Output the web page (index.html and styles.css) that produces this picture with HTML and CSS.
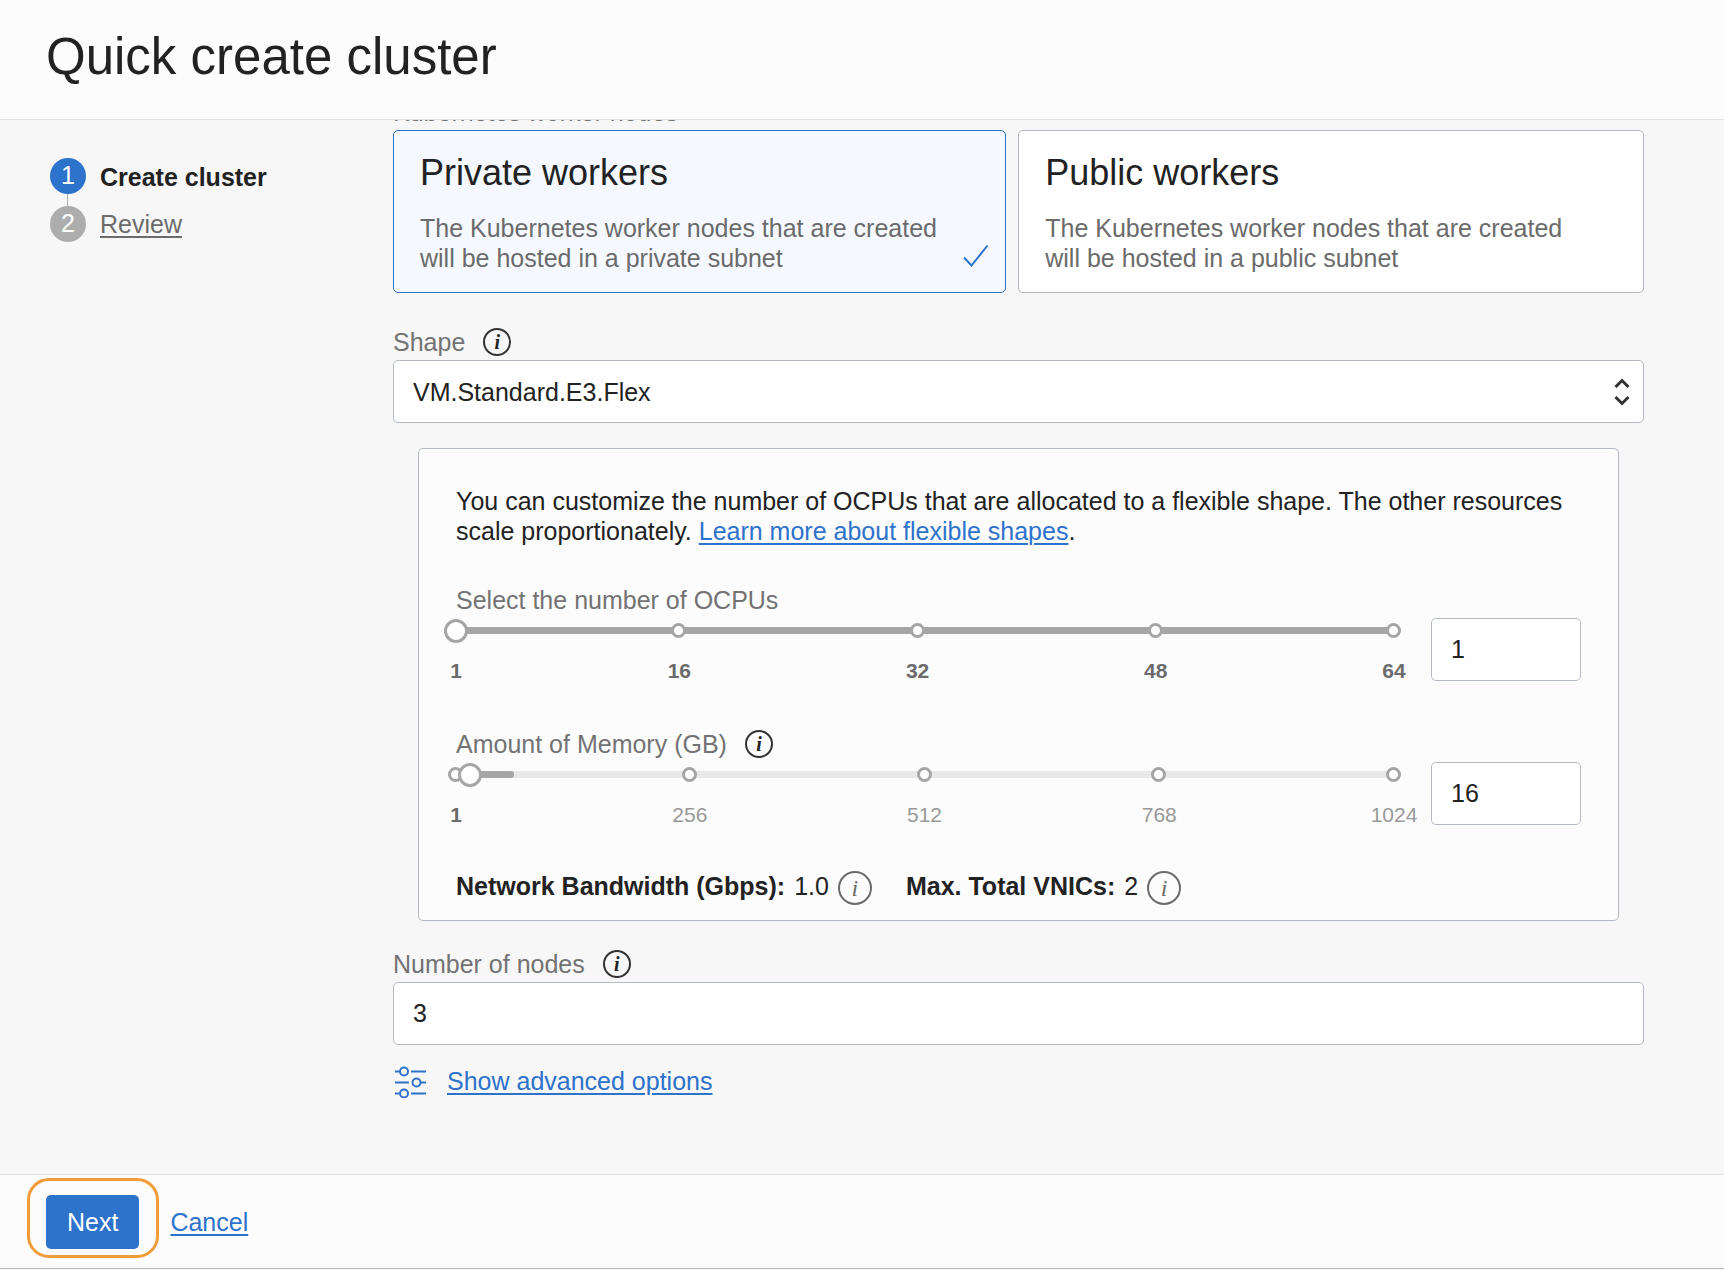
FILE: index.html
```
<!DOCTYPE html>
<html lang="en">
<head>
<meta charset="utf-8">
<meta name="viewport" content="width=device-width, initial-scale=1">
<title>Quick create cluster</title>
<link rel="stylesheet" href="styles.css">
</head>
<body>
<header class="page-header">
  <h1 class="page-title">Quick create cluster</h1>
</header>

<div class="page-body">
  <nav aria-label="Steps">
    <ol class="steps">
      <li class="step step-current"><span class="step-number">1</span><span class="step-name">Create cluster</span></li>
      <li class="step"><span class="step-number">2</span><a class="step-link" href="#review">Review</a></li>
    </ol>
  </nav>

  <main class="form">
    <div class="group-label" id="workers-label">Kubernetes worker nodes</div>
    <div class="cards" role="radiogroup" aria-labelledby="workers-label">
      <label class="card">
        <input class="card-radio" type="radio" name="workers" checked>
        <span class="card-title">Private workers</span>
        <span class="card-text">The Kubernetes worker nodes that are created will be hosted in a private subnet</span>
        <svg class="card-check" viewBox="0 0 26 24" aria-hidden="true"><path d="M1 13.500L8.500 21.500L24.500 1.500" fill="none" stroke="currentColor" stroke-width="2"/></svg>
      </label>
      <label class="card">
        <input class="card-radio" type="radio" name="workers">
        <span class="card-title">Public workers</span>
        <span class="card-text">The Kubernetes worker nodes that are created will be hosted in a public subnet</span>
      </label>
    </div>

    <div class="field shape-field">
      <div class="field-head"><label for="shape">Shape</label><button class="info" type="button" aria-label="About shape">i</button></div>
      <div class="select-box">
        <select class="control" id="shape"><option>VM.Standard.E3.Flex</option></select>
        <svg class="select-arrows" viewBox="0 0 16 28" aria-hidden="true"><path d="M1.500 9L8 2.500L14.500 9M1.500 19L8 25.500L14.500 19" fill="none" stroke="currentColor" stroke-width="3"/></svg>
      </div>
    </div>

    <section class="panel">
      <p class="panel-text">You can customize the number of OCPUs that are allocated to a flexible shape. The other resources scale proportionately. <a href="#flexible">Learn more about flexible shapes</a>.</p>

      <div class="field">
        <div class="field-head"><label for="ocpus">Select the number of OCPUs</label></div>
        <div class="slider-row">
          <div class="slider">
            <div class="track"><div class="track-fill" style="width:100%"></div></div>
            <span class="stop" style="left:23.81%"></span>
            <span class="stop" style="left:49.21%"></span>
            <span class="stop" style="left:74.6%"></span>
            <span class="stop" style="left:100%"></span>
            <input class="range" type="range" id="ocpus" min="1" max="64" value="1">
            <span class="tick tick-on" style="left:0%">1</span>
            <span class="tick tick-on" style="left:23.81%">16</span>
            <span class="tick tick-on" style="left:49.21%">32</span>
            <span class="tick tick-on" style="left:74.6%">48</span>
            <span class="tick tick-on" style="left:100%">64</span>
          </div>
          <input class="control" type="text" value="1" aria-label="Number of OCPUs">
        </div>
      </div>

      <div class="field memory-field">
        <div class="field-head"><label for="memory">Amount of Memory (GB)</label><button class="info" type="button" aria-label="About memory">i</button></div>
        <div class="slider-row">
          <div class="slider">
            <div class="track"><div class="track-fill" style="width:6.16%"></div></div>
            <span class="stop" style="left:0%"></span>
            <span class="stop" style="left:24.93%"></span>
            <span class="stop" style="left:49.95%"></span>
            <span class="stop" style="left:74.98%"></span>
            <span class="stop" style="left:100%"></span>
            <input class="range" type="range" id="memory" min="1" max="1024" value="16">
            <span class="tick tick-on" style="left:0%">1</span>
            <span class="tick" style="left:24.93%">256</span>
            <span class="tick" style="left:49.95%">512</span>
            <span class="tick" style="left:74.98%">768</span>
            <span class="tick" style="left:100%">1024</span>
          </div>
          <input class="control" type="text" value="16" aria-label="Memory in GB">
        </div>
      </div>

      <div class="specs">
        <div class="spec"><strong>Network Bandwidth (Gbps):</strong><span>1.0</span><button class="info info-large" type="button" aria-label="About network bandwidth">i</button></div>
        <div class="spec"><strong>Max. Total VNICs:</strong><span>2</span><button class="info info-large" type="button" aria-label="About VNICs">i</button></div>
      </div>
    </section>

    <div class="field nodes-field">
      <div class="field-head"><label for="nodes">Number of nodes</label><button class="info" type="button" aria-label="About number of nodes">i</button></div>
      <input class="control" id="nodes" type="text" value="3">
    </div>

    <div class="advanced">
      <svg class="advanced-icon" viewBox="0 0 32 32" aria-hidden="true"><g fill="none" stroke="currentColor" stroke-width="2"><path d="M1 5.500H5M17 5.500H32M1 16.500H15M27 16.500H32M1 27.500H5M17 27.500H32"/><circle cx="10" cy="5.500" r="4"/><circle cx="22.500" cy="16.500" r="4"/><circle cx="10" cy="27.500" r="4"/></g></svg>
      <a href="#advanced">Show advanced options</a>
    </div>
  </main>
</div>

<footer class="page-footer">
  <div class="highlight"><button class="next" type="button">Next</button></div>
  <a class="cancel" href="#cancel">Cancel</a>
</footer>
</body>
</html>
```
FILE: styles.css
```
* {
  box-sizing: border-box;
}

body {
  margin: 0;
  min-height: 100vh;
  display: flex;
  flex-direction: column;
  background: #f7f7f7;
  color: #222;
  font: 25px/30px "Liberation Sans", Arial, sans-serif;
}

a {
  color: #2d72cb;
  text-decoration-thickness: 2px;
  text-underline-offset: 3px;
}

button,
input,
select {
  font: inherit;
  color: inherit;
}

.page-header {
  padding: 27px 46px 32px;
  background: #fcfcfc;
  border-bottom: 1px solid #e2e2e2;
}

.page-title {
  margin: 0;
  font-size: 51px;
  line-height: 60px;
  font-weight: 400;
}

.page-body {
  flex: 1;
  display: grid;
  grid-template-columns: 393px 1fr;
  padding-right: 80px;
  overflow: hidden;
}

/* Steps */
.steps {
  list-style: none;
  margin: 0;
  padding: 38px 0 0 50px;
  display: flex;
  flex-direction: column;
  gap: 12px;
}

.step {
  position: relative;
  display: flex;
  gap: 14px;
  line-height: 36px;
}

.step-number {
  width: 36px;
  height: 36px;
  border-radius: 50%;
  background: #adadad;
  color: #fff;
  text-align: center;
  line-height: 34px;
}

.step-current .step-number {
  background: #2d72cb;
}

.step-current::after {
  content: "";
  position: absolute;
  left: 17px;
  top: 36px;
  width: 1px;
  height: 12px;
  background: #adadad;
}

.step-name {
  font-weight: 700;
  line-height: 38px;
  height: 36px;
}

.step-link {
  color: #6b6b6b;
}

/* Form */
.form {
  min-width: 0;
  padding-bottom: 60px;
}

.group-label {
  margin-top: -23px;
  margin-bottom: 3px;
  color: #737373;
}

.cards {
  display: grid;
  grid-template-columns: 49fr 50fr;
  gap: 12px;
}

.card {
  position: relative;
  display: flex;
  flex-direction: column;
  gap: 21px;
  padding: 23px 60px 19px 26px;
  border: 1px solid #b3b9c2;
  border-radius: 5px;
  background: #fff;
}

.card:has(:checked) {
  border-color: #2d72cb;
  background: #f5f9ff;
}

.card-radio {
  position: absolute;
  opacity: 0;
}

.card-title {
  font-size: 36px;
  line-height: 38px;
}

.card-text {
  color: #6b6b6b;
}

.card-check {
  position: absolute;
  right: 16px;
  bottom: 24px;
  width: 26px;
  height: 24px;
  color: #2d72cb;
}

.field {
  display: flex;
  flex-direction: column;
  gap: 4px;
}

.field-head {
  display: flex;
  gap: 18px;
  line-height: 28px;
  color: #737373;
}

.shape-field {
  margin-top: 35px;
}

.info {
  flex: none;
  width: 28px;
  height: 28px;
  padding: 0;
  border: 2px solid #333;
  border-radius: 50%;
  background: none;
  color: #222;
  font: italic 700 20px/24px "Liberation Serif", serif;
  text-align: center;
}

.info-large {
  width: 34px;
  height: 34px;
  border-color: #6b6b6b;
  color: #6b6b6b;
  font-size: 24px;
  font-weight: 400;
  line-height: 30px;
}

.control {
  display: block;
  width: 100%;
  height: 63px;
  padding: 0 19px;
  border: 1px solid #b3b9c2;
  border-radius: 5px;
  background: #fff;
  appearance: none;
}

.select-box {
  position: relative;
}

.select-arrows {
  position: absolute;
  right: 14px;
  top: 18px;
  width: 16px;
  height: 28px;
  color: #333;
  pointer-events: none;
}

.panel {
  margin: 25px 25px 0;
  padding: 37px 37px 15px;
  border: 1px solid #b3b9c2;
  border-radius: 5px;
  background: #fcfcfc;
}

.panel-text {
  margin: 0 0 40px;
}

.slider-row {
  display: grid;
  grid-template-columns: 1fr 150px;
  gap: 37px;
}

.slider {
  position: relative;
}

.track {
  height: 7px;
  margin-top: 9px;
  border-radius: 3px;
  background: #e8e8e8;
}

.track-fill {
  height: 100%;
  border-radius: 3px;
  background: #a6a6a6;
}

.stop {
  position: absolute;
  top: 5px;
  width: 15px;
  height: 15px;
  margin-left: -8px;
  border: 3px solid #a6a6a6;
  border-radius: 50%;
  background: #fff;
}

.range {
  position: absolute;
  top: 0;
  left: -12px;
  width: calc(100% + 24px);
  height: 25px;
  margin: 0;
  background: none;
  appearance: none;
}

.range::-webkit-slider-thumb {
  width: 24px;
  height: 24px;
  border: 3px solid #a6a6a6;
  border-radius: 50%;
  background: #fff;
  appearance: none;
}

.tick {
  position: absolute;
  top: 41px;
  width: 60px;
  margin-left: -30px;
  text-align: center;
  font-size: 21px;
  line-height: 24px;
  color: #999;
}

.tick-on {
  color: #6b6b6b;
  font-weight: 700;
}

.memory-field {
  margin-top: 49px;
}

.specs {
  display: flex;
  gap: 34px;
  margin-top: 46px;
}

.spec {
  display: flex;
  gap: 9px;
}

.nodes-field {
  margin-top: 29px;
}

.advanced {
  display: flex;
  gap: 21px;
  margin-top: 21px;
}

.advanced-icon {
  width: 32px;
  height: 32px;
  margin-left: 1px;
  color: #2d72cb;
}

/* Footer */
.page-footer {
  display: flex;
  align-items: center;
  gap: 31px;
  margin-bottom: 1px;
  padding: 20px 46px 19px;
  border-top: 1px solid #e2e2e2;
  border-bottom: 1px solid #b0b8be;
  background: #fcfcfc;
}

.highlight {
  position: relative;
}

.highlight::after {
  content: "";
  position: absolute;
  inset: -17px -20px -9px -19px;
  border: 3px solid #f29c38;
  border-radius: 22px;
  pointer-events: none;
}

.next {
  display: block;
  height: 54px;
  padding: 0 21px;
  border: 0;
  border-radius: 5px;
  background: #2d72cb;
  color: #fff;
}
```
